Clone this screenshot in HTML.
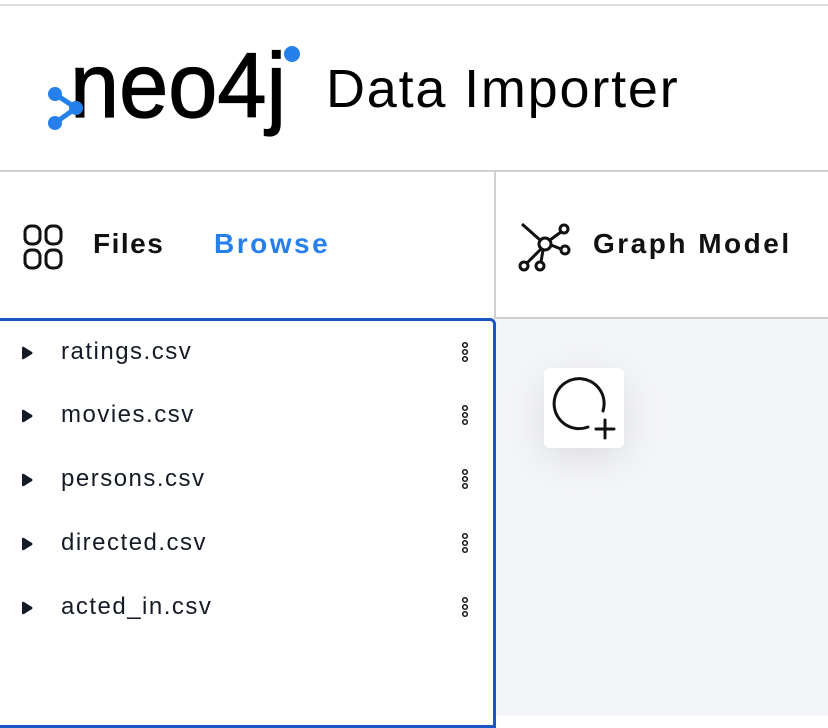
<!DOCTYPE html>
<html><head><style>
*{margin:0;padding:0;box-sizing:border-box}
body{width:828px;height:716px;overflow:hidden;background:#fff;font-family:"Liberation Sans",sans-serif;position:relative;color:#111}
.abs{position:absolute}
.row{position:absolute;left:0;width:490px;height:40px}
.row .tri{position:absolute;left:20px;top:13px}
.row .t{position:absolute;left:61px;top:5px;font-size:24px;color:#151b26;letter-spacing:1.5px}
.row .k{position:absolute;left:459px;top:6px}
</style></head><body>
<div class="abs" style="left:0;top:4px;width:828px;height:2px;background:#ddd"></div>
<div class="abs" style="left:70px;top:39px;font-size:92px;color:#000;line-height:94px;transform:scaleX(0.96);transform-origin:0 0;-webkit-text-stroke:1.2px #000">neo4j</div>
<svg class="abs" style="left:44px;top:42px" width="260" height="90" viewBox="0 0 260 90">
 <g fill="#2680eb" stroke="#2680eb">
  <path d="M11 52 L32 66 L11 81" fill="none" stroke-width="5"/>
  <circle cx="11" cy="52" r="7" stroke="none"/>
  <circle cx="32" cy="66" r="7" stroke="none"/>
  <circle cx="11" cy="81" r="7" stroke="none"/>
  <circle cx="248" cy="12" r="8" stroke="none"/>
 </g>
</svg>
<div class="abs" style="left:326px;top:57px;font-size:54px;color:#000;line-height:64px;letter-spacing:1.8px">Data Importer</div>
<div class="abs" style="left:0;top:170px;width:828px;height:2px;background:#d0d0d0"></div>
<div class="abs" style="left:494px;top:171px;width:2px;height:148px;background:#d0d0d0"></div>
<div class="abs" style="left:496px;top:317px;width:332px;height:2px;background:#d0d0d0"></div>
<svg class="abs" style="left:22px;top:223px" width="44" height="48" viewBox="0 0 44 48" fill="none" stroke="#111" stroke-width="3">
 <rect x="3" y="3" width="15" height="18" rx="6"/><rect x="24" y="3" width="15" height="18" rx="6"/>
 <rect x="3" y="27" width="15" height="18" rx="6"/><rect x="24" y="27" width="15" height="18" rx="6"/>
</svg>
<div class="abs" style="left:93px;top:228px;font-size:28px;font-weight:bold;color:#111;letter-spacing:1.5px">Files</div>
<div class="abs" style="left:214px;top:228px;font-size:28px;font-weight:bold;color:#2680eb;letter-spacing:2.5px">Browse</div>
<svg class="abs" style="left:518px;top:220px" width="54" height="54" viewBox="0 0 54 54" fill="none" stroke="#111" stroke-width="3">
 <circle cx="27" cy="24" r="6"/>
 <circle cx="46" cy="9" r="4"/><circle cx="47" cy="30" r="4"/><circle cx="6" cy="46" r="4"/><circle cx="22" cy="46" r="4"/>
 <path d="M32 20 L43 12 M33 25 L43 29 M23 29 L9 43 M25 30 L23 42 M22 20 L4 4"/>
</svg>
<div class="abs" style="left:593px;top:228px;font-size:28px;font-weight:bold;color:#111;letter-spacing:2.5px">Graph Model</div>
<div class="abs" style="left:-4px;top:318px;width:500px;height:410px;border:3px solid #1a56c4;border-radius:0 6px 0 0"></div>
<div class="abs" style="left:496px;top:319px;width:332px;height:397px;background:#f4f5f8"></div>
<div class="abs" style="left:544px;top:368px;width:80px;height:80px;background:#fff;border-radius:6px;box-shadow:0 10px 40px rgba(0,0,0,0.10)"></div>
<svg class="abs" style="left:544px;top:368px" width="80" height="80" viewBox="0 0 80 80" fill="none" stroke="#111" stroke-width="3" stroke-linecap="round">
 <path d="M44 59 A25 25 0 1 1 59 43"/>
 <path d="M61 52 V70 M52 61 H70"/>
</svg>
<div class="row" style="top:333px"><svg class="tri" width="14" height="14" viewBox="0 0 14 14"><path d="M2 2 Q2 0 4 1 L12 6 Q13 7 12 8 L4 13 Q2 14 2 12 Z" fill="#151b26"/></svg><div class="t">ratings.csv</div><svg class="k" width="12" height="28" viewBox="0 0 12 28" fill="none" stroke="#111" stroke-width="1.5"><circle cx="6" cy="6" r="2.3"/><circle cx="6" cy="13" r="2.3"/><circle cx="6" cy="20" r="2.3"/></svg></div>
<div class="row" style="top:396px"><svg class="tri" width="14" height="14" viewBox="0 0 14 14"><path d="M2 2 Q2 0 4 1 L12 6 Q13 7 12 8 L4 13 Q2 14 2 12 Z" fill="#151b26"/></svg><div class="t">movies.csv</div><svg class="k" width="12" height="28" viewBox="0 0 12 28" fill="none" stroke="#111" stroke-width="1.5"><circle cx="6" cy="6" r="2.3"/><circle cx="6" cy="13" r="2.3"/><circle cx="6" cy="20" r="2.3"/></svg></div>
<div class="row" style="top:460px"><svg class="tri" width="14" height="14" viewBox="0 0 14 14"><path d="M2 2 Q2 0 4 1 L12 6 Q13 7 12 8 L4 13 Q2 14 2 12 Z" fill="#151b26"/></svg><div class="t">persons.csv</div><svg class="k" width="12" height="28" viewBox="0 0 12 28" fill="none" stroke="#111" stroke-width="1.5"><circle cx="6" cy="6" r="2.3"/><circle cx="6" cy="13" r="2.3"/><circle cx="6" cy="20" r="2.3"/></svg></div>
<div class="row" style="top:524px"><svg class="tri" width="14" height="14" viewBox="0 0 14 14"><path d="M2 2 Q2 0 4 1 L12 6 Q13 7 12 8 L4 13 Q2 14 2 12 Z" fill="#151b26"/></svg><div class="t">directed.csv</div><svg class="k" width="12" height="28" viewBox="0 0 12 28" fill="none" stroke="#111" stroke-width="1.5"><circle cx="6" cy="6" r="2.3"/><circle cx="6" cy="13" r="2.3"/><circle cx="6" cy="20" r="2.3"/></svg></div>
<div class="row" style="top:588px"><svg class="tri" width="14" height="14" viewBox="0 0 14 14"><path d="M2 2 Q2 0 4 1 L12 6 Q13 7 12 8 L4 13 Q2 14 2 12 Z" fill="#151b26"/></svg><div class="t">acted_in.csv</div><svg class="k" width="12" height="28" viewBox="0 0 12 28" fill="none" stroke="#111" stroke-width="1.5"><circle cx="6" cy="6" r="2.3"/><circle cx="6" cy="13" r="2.3"/><circle cx="6" cy="20" r="2.3"/></svg></div>
</body></html>
